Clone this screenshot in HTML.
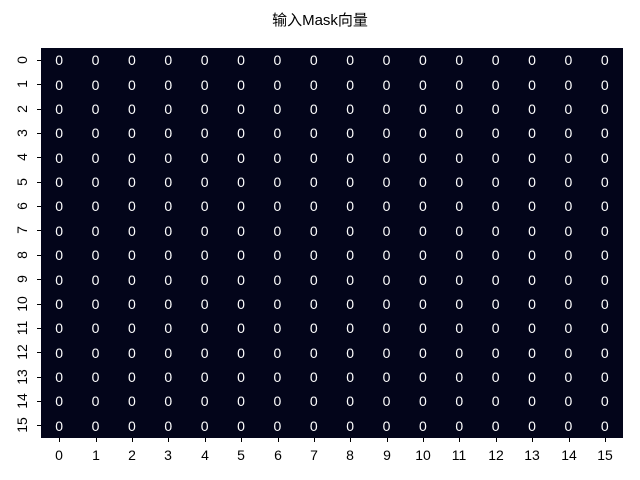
<!DOCTYPE html>
<html><head><meta charset="utf-8"><style>
body{margin:0;width:640px;height:480px;background:#fff;position:relative;overflow:hidden;font-family:"Liberation Sans","Noto Sans CJK SC",sans-serif;}
.title{position:absolute;top:9px;left:0;width:640px;text-align:center;font-size:15px;color:#000;}
.hm{position:absolute;left:41px;top:48px;width:582px;height:390px;background:#03051a;overflow:hidden;}
.r{display:flex;height:24.375px;}
.r i{font-style:normal;flex:1;color:#fff;font-size:14px;display:flex;align-items:center;justify-content:center;}
.xl{position:absolute;top:447px;font-size:14px;width:30px;margin-left:-15px;text-align:center;}
.xt{position:absolute;top:438px;width:1px;height:4px;background:#000;}
.yl{position:absolute;left:14px;font-size:14px;width:30px;height:16px;margin-top:-8px;text-align:center;transform:rotate(-90deg);transform-origin:center;margin-left:-7px;line-height:16px;}
.yt{position:absolute;left:37px;width:4px;height:1px;background:#000;}
</style></head><body>
<div class="title">输入Mask向量</div>
<div class="hm">
<div class="r"><i>0</i><i>0</i><i>0</i><i>0</i><i>0</i><i>0</i><i>0</i><i>0</i><i>0</i><i>0</i><i>0</i><i>0</i><i>0</i><i>0</i><i>0</i><i>0</i></div>
<div class="r"><i>0</i><i>0</i><i>0</i><i>0</i><i>0</i><i>0</i><i>0</i><i>0</i><i>0</i><i>0</i><i>0</i><i>0</i><i>0</i><i>0</i><i>0</i><i>0</i></div>
<div class="r"><i>0</i><i>0</i><i>0</i><i>0</i><i>0</i><i>0</i><i>0</i><i>0</i><i>0</i><i>0</i><i>0</i><i>0</i><i>0</i><i>0</i><i>0</i><i>0</i></div>
<div class="r"><i>0</i><i>0</i><i>0</i><i>0</i><i>0</i><i>0</i><i>0</i><i>0</i><i>0</i><i>0</i><i>0</i><i>0</i><i>0</i><i>0</i><i>0</i><i>0</i></div>
<div class="r"><i>0</i><i>0</i><i>0</i><i>0</i><i>0</i><i>0</i><i>0</i><i>0</i><i>0</i><i>0</i><i>0</i><i>0</i><i>0</i><i>0</i><i>0</i><i>0</i></div>
<div class="r"><i>0</i><i>0</i><i>0</i><i>0</i><i>0</i><i>0</i><i>0</i><i>0</i><i>0</i><i>0</i><i>0</i><i>0</i><i>0</i><i>0</i><i>0</i><i>0</i></div>
<div class="r"><i>0</i><i>0</i><i>0</i><i>0</i><i>0</i><i>0</i><i>0</i><i>0</i><i>0</i><i>0</i><i>0</i><i>0</i><i>0</i><i>0</i><i>0</i><i>0</i></div>
<div class="r"><i>0</i><i>0</i><i>0</i><i>0</i><i>0</i><i>0</i><i>0</i><i>0</i><i>0</i><i>0</i><i>0</i><i>0</i><i>0</i><i>0</i><i>0</i><i>0</i></div>
<div class="r"><i>0</i><i>0</i><i>0</i><i>0</i><i>0</i><i>0</i><i>0</i><i>0</i><i>0</i><i>0</i><i>0</i><i>0</i><i>0</i><i>0</i><i>0</i><i>0</i></div>
<div class="r"><i>0</i><i>0</i><i>0</i><i>0</i><i>0</i><i>0</i><i>0</i><i>0</i><i>0</i><i>0</i><i>0</i><i>0</i><i>0</i><i>0</i><i>0</i><i>0</i></div>
<div class="r"><i>0</i><i>0</i><i>0</i><i>0</i><i>0</i><i>0</i><i>0</i><i>0</i><i>0</i><i>0</i><i>0</i><i>0</i><i>0</i><i>0</i><i>0</i><i>0</i></div>
<div class="r"><i>0</i><i>0</i><i>0</i><i>0</i><i>0</i><i>0</i><i>0</i><i>0</i><i>0</i><i>0</i><i>0</i><i>0</i><i>0</i><i>0</i><i>0</i><i>0</i></div>
<div class="r"><i>0</i><i>0</i><i>0</i><i>0</i><i>0</i><i>0</i><i>0</i><i>0</i><i>0</i><i>0</i><i>0</i><i>0</i><i>0</i><i>0</i><i>0</i><i>0</i></div>
<div class="r"><i>0</i><i>0</i><i>0</i><i>0</i><i>0</i><i>0</i><i>0</i><i>0</i><i>0</i><i>0</i><i>0</i><i>0</i><i>0</i><i>0</i><i>0</i><i>0</i></div>
<div class="r"><i>0</i><i>0</i><i>0</i><i>0</i><i>0</i><i>0</i><i>0</i><i>0</i><i>0</i><i>0</i><i>0</i><i>0</i><i>0</i><i>0</i><i>0</i><i>0</i></div>
<div class="r"><i>0</i><i>0</i><i>0</i><i>0</i><i>0</i><i>0</i><i>0</i><i>0</i><i>0</i><i>0</i><i>0</i><i>0</i><i>0</i><i>0</i><i>0</i><i>0</i></div>
</div>

<div class="xt" style="left:59px"></div><div class="xl" style="left:59px">0</div>
<div class="xt" style="left:96px"></div><div class="xl" style="left:96px">1</div>
<div class="xt" style="left:132px"></div><div class="xl" style="left:132px">2</div>
<div class="xt" style="left:168px"></div><div class="xl" style="left:168px">3</div>
<div class="xt" style="left:205px"></div><div class="xl" style="left:205px">4</div>
<div class="xt" style="left:241px"></div><div class="xl" style="left:241px">5</div>
<div class="xt" style="left:278px"></div><div class="xl" style="left:278px">6</div>
<div class="xt" style="left:314px"></div><div class="xl" style="left:314px">7</div>
<div class="xt" style="left:350px"></div><div class="xl" style="left:350px">8</div>
<div class="xt" style="left:387px"></div><div class="xl" style="left:387px">9</div>
<div class="xt" style="left:423px"></div><div class="xl" style="left:423px">10</div>
<div class="xt" style="left:459px"></div><div class="xl" style="left:459px">11</div>
<div class="xt" style="left:496px"></div><div class="xl" style="left:496px">12</div>
<div class="xt" style="left:532px"></div><div class="xl" style="left:532px">13</div>
<div class="xt" style="left:569px"></div><div class="xl" style="left:569px">14</div>
<div class="xt" style="left:605px"></div><div class="xl" style="left:605px">15</div>

<div class="yt" style="top:60px"></div><div class="yl" style="top:60px">0</div>
<div class="yt" style="top:84px"></div><div class="yl" style="top:84px">1</div>
<div class="yt" style="top:109px"></div><div class="yl" style="top:109px">2</div>
<div class="yt" style="top:133px"></div><div class="yl" style="top:133px">3</div>
<div class="yt" style="top:157px"></div><div class="yl" style="top:157px">4</div>
<div class="yt" style="top:182px"></div><div class="yl" style="top:182px">5</div>
<div class="yt" style="top:206px"></div><div class="yl" style="top:206px">6</div>
<div class="yt" style="top:230px"></div><div class="yl" style="top:230px">7</div>
<div class="yt" style="top:255px"></div><div class="yl" style="top:255px">8</div>
<div class="yt" style="top:279px"></div><div class="yl" style="top:279px">9</div>
<div class="yt" style="top:304px"></div><div class="yl" style="top:304px">10</div>
<div class="yt" style="top:328px"></div><div class="yl" style="top:328px">11</div>
<div class="yt" style="top:352px"></div><div class="yl" style="top:352px">12</div>
<div class="yt" style="top:377px"></div><div class="yl" style="top:377px">13</div>
<div class="yt" style="top:401px"></div><div class="yl" style="top:401px">14</div>
<div class="yt" style="top:425px"></div><div class="yl" style="top:425px">15</div>
</body></html>
